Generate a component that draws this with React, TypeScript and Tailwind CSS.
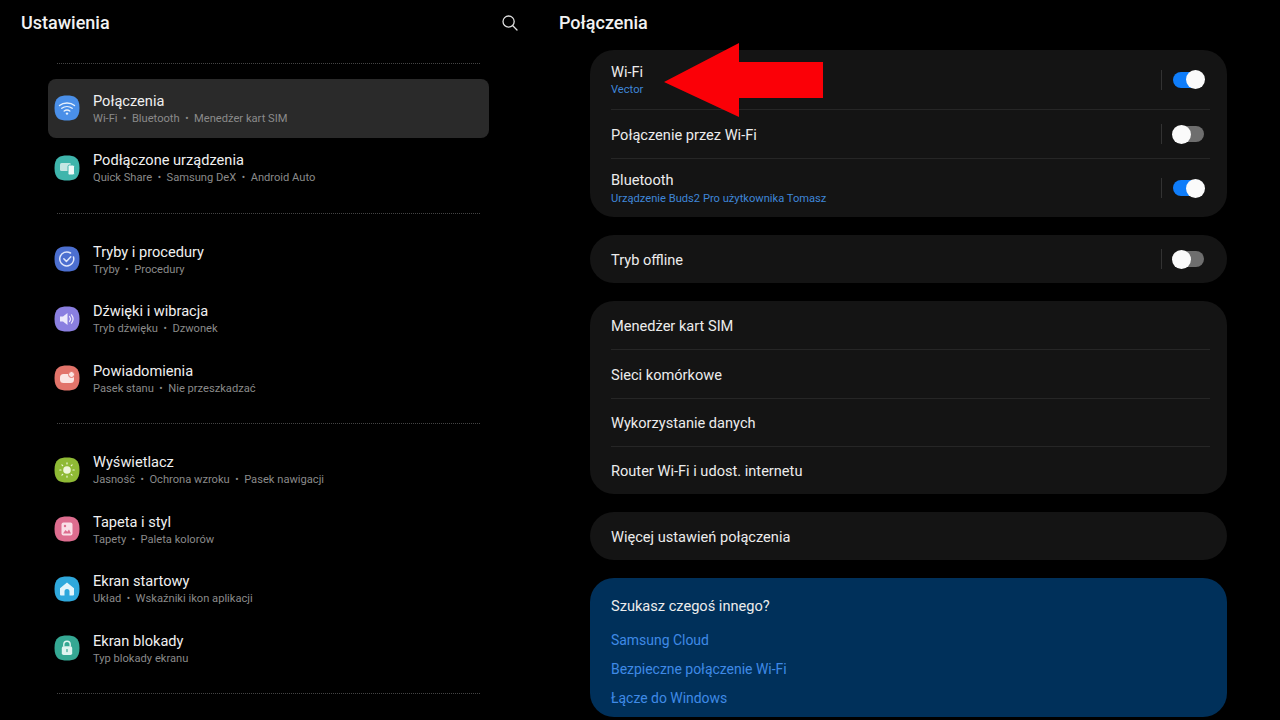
import React from "react";

const font = { fontFamily: "Roboto, 'Noto Sans', sans-serif" };

function Squircle({ color, children }: { color: string; children: React.ReactNode }) {
  return (
    <svg width="26" height="26" viewBox="0 0 26 26" className="shrink-0">
      <path d="M13 .5C20 .5 25.500 2 25.500 13S20 25.500 13 25.500.5 24 .5 13 6 .5 13 .5Z" fill={color} />
      {children}
    </svg>
  );
}

const icons: Record<string, React.ReactNode> = {
  wifi: (
    <Squircle color="#4a8fe8">
      <g fill="none" stroke="#e6f0fc" strokeWidth="1.4" strokeLinecap="round">
        <path d="M5.500 10.500C9.500 7.200 16.500 7.200 20.500 10.500" />
        <path d="M7.800 13.300C10.800 11 15.200 11 18.200 13.300" />
        <path d="M10.200 16C11.800 14.800 14.200 14.800 15.800 16" />
      </g>
      <circle cx="13" cy="18.600" r="1.200" fill="#e6f0fc" />
    </Squircle>
  ),
  devices: (
    <Squircle color="#3fb5ac">
      <rect x="6" y="8" width="11" height="8" rx="1.500" fill="#c5e6e3" />
      <rect x="14" y="10" width="6.500" height="10" rx="1.500" fill="#eef9f8" stroke="#3fb5ac" strokeWidth="1" />
    </Squircle>
  ),
  modes: (
    <Squircle color="#4c6fd0">
      <path d="M19.500 11A7 7 0 1 1 16.500 7" fill="none" stroke="#dfe6fa" strokeWidth="1.500" strokeLinecap="round" />
      <path d="M9.800 12.800L12.400 15.400L16.800 10.800" fill="none" stroke="#dfe6fa" strokeWidth="1.500" strokeLinecap="round" strokeLinejoin="round" />
    </Squircle>
  ),
  sound: (
    <Squircle color="#8a7fe0">
      <path d="M6 10.500H9L13.500 7V19L9 15.500H6Z" fill="#ece9fb" />
      <path d="M15.500 10.500C16.700 12 16.700 14 15.500 15.500M17.500 8.800C19.500 11.400 19.500 14.600 17.500 17.200" fill="none" stroke="#ece9fb" strokeWidth="1.200" strokeLinecap="round" />
    </Squircle>
  ),
  notif: (
    <Squircle color="#e2746a">
      <rect x="6" y="9" width="14" height="9" rx="3.500" fill="#fbe6e3" />
      <circle cx="17.500" cy="9.500" r="3" fill="#fbe6e3" stroke="#e2746a" strokeWidth="1" />
    </Squircle>
  ),
  display: (
    <Squircle color="#8fba35">
      <circle cx="13" cy="13" r="3.800" fill="#eff6da" />
      <g stroke="#eff6da" strokeWidth="1.200" strokeLinecap="round">
        <path d="M13 5.800V7M13 19V20.200M5.800 13H7M19 13H20.200M7.900 7.900L8.700 8.700M17.300 17.300L18.100 18.100M7.900 18.100L8.700 17.300M17.300 8.700L18.100 7.900" />
      </g>
    </Squircle>
  ),
  wallpaper: (
    <Squircle color="#dd6d8f">
      <rect x="7.500" y="6.500" width="11" height="13" rx="2" fill="#f9dfe7" />
      <path d="M9 17.500L11.500 14L13.300 15.800L15 13.500L17 17.500Z" fill="#dd6d8f" />
      <circle cx="11" cy="10" r="1.200" fill="#dd6d8f" />
    </Squircle>
  ),
  home: (
    <Squircle color="#2fa8dc">
      <path d="M13 6.500L20 12.200V18.500A1 1 0 0 1 19 19.500H15.500V15.500A2.500 2.500 0 0 0 10.500 15.500V19.500H7A1 1 0 0 1 6 18.500V12.200Z" fill="#e3f4fb" />
    </Squircle>
  ),
  lock: (
    <Squircle color="#35a893">
      <path d="M9.800 11.500V9.500A3.200 3.200 0 0 1 16.200 9.500V11.500" fill="none" stroke="#e0f4f0" strokeWidth="1.400" />
      <rect x="7.800" y="11.200" width="10.400" height="8.800" rx="1.800" fill="#e0f4f0" />
      <rect x="12.400" y="14" width="1.200" height="3.200" rx=".6" fill="#35a893" />
    </Squircle>
  ),
};

function Row({ icon, title, parts, active }: { icon: string; title: string; parts: string[]; active?: boolean }) {
  return (
    <div className={`flex h-[59.500px] items-center gap-[13px] rounded-lg pl-[6px] ${active ? "bg-[#2a2a2a]" : ""}`}>
      {icons[icon]}
      <div className="flex flex-col">
        <div className="text-[14.600px] leading-[20px] text-[#f0f0f0]">{title}</div>
        <div className="mt-[1px] flex items-center text-[11.150px] leading-[14px] text-[#8a8a8a]">
          {parts.map((p, i) => (
            <React.Fragment key={p}>
              {i > 0 && <span className="mx-[5.500px] text-[10px]">•</span>}
              <span>{p}</span>
            </React.Fragment>
          ))}
        </div>
      </div>
    </div>
  );
}

function Dots() {
  return <div className="mx-[9px] border-t border-dotted border-[#444444]" />;
}

function Toggle({ on }: { on?: boolean }) {
  return (
    <div className={`flex items-center ${on ? "" : "mb-[1px]"}`}>
      <div className="mr-[11px] h-[20px] w-px bg-[#333333]" />
      <div className={`relative h-[16px] w-[31px] rounded-full ${on ? "bg-[#0f7dfa]" : "bg-[#6e6e6e]"}`}>
        <div className={`absolute top-[-1.500px] size-[19px] rounded-full bg-[#fafafa] ${on ? "right-[-1px]" : "left-[-1px]"}`} />
      </div>
    </div>
  );
}

function Item({ title, sub, toggle, h }: { title: string; sub?: string; toggle?: "on" | "off"; h: string }) {
  return (
    <div className={`flex items-center justify-between pr-[6px] ${h}`}>
      <div className="flex flex-col">
        <div className="text-[14.600px] leading-[20px] text-[#ececec]">{title}</div>
        {sub && <div className="mt-[1.500px] text-[11.150px] leading-[14px] text-[#3f86d8]">{sub}</div>}
      </div>
      {toggle && <Toggle on={toggle === "on"} />}
    </div>
  );
}

function Line() {
  return <div className="h-px bg-[#262626]" />;
}

export default function App() {
  return (
    <div style={font} className="relative flex h-[720px] w-[1280px] overflow-hidden bg-black">
      <aside className="flex w-[530px] shrink-0 flex-col">
        <header className="flex h-[46px] items-center justify-between pl-[21px] pr-[11px]">
          <h1 className="mb-[2px] text-[18px] font-medium text-[#f2f2f2]">Ustawienia</h1>
          <svg width="18" height="18" viewBox="0 0 18 18" fill="none" stroke="#e0e0e0" strokeWidth="1.300" strokeLinecap="round">
            <circle cx="7.600" cy="7.600" r="5.600" />
            <path d="M11.800 11.800L16 16" />
          </svg>
        </header>
        <div className="flex flex-col pl-[48px] pr-[41px] pt-[16.500px]">
          <Dots />
          <div className="mt-[15px] mb-[15px]">
            <Row active icon="wifi" title="Połączenia" parts={["Wi-Fi", "Bluetooth", "Menedżer kart SIM"]} />
            <Row icon="devices" title="Podłączone urządzenia" parts={["Quick Share", "Samsung DeX", "Android Auto"]} />
          </div>
          <Dots />
          <div className="mt-[16px] mb-[15px]">
            <Row icon="modes" title="Tryby i procedury" parts={["Tryby", "Procedury"]} />
            <Row icon="sound" title="Dźwięki i wibracja" parts={["Tryb dźwięku", "Dzwonek"]} />
            <Row icon="notif" title="Powiadomienia" parts={["Pasek stanu", "Nie przeszkadzać"]} />
          </div>
          <Dots />
          <div className="mt-[16px] mb-[15px]">
            <Row icon="display" title="Wyświetlacz" parts={["Jasność", "Ochrona wzroku", "Pasek nawigacji"]} />
            <Row icon="wallpaper" title="Tapeta i styl" parts={["Tapety", "Paleta kolorów"]} />
            <Row icon="home" title="Ekran startowy" parts={["Układ", "Wskaźniki ikon aplikacji"]} />
            <Row icon="lock" title="Ekran blokady" parts={["Typ blokady ekranu"]} />
          </div>
          <Dots />
        </div>
      </aside>
      <main className="flex flex-1 flex-col">
        <header className="flex h-[46px] items-center pl-[29px]">
          <h2 className="mb-[2px] text-[18px] font-medium text-[#f2f2f2]">Połączenia</h2>
        </header>
        <div className="ml-[60px] mr-[53px] mt-[4px] flex flex-col gap-[18px]">
          <section className="rounded-[24px] bg-[#141414] px-[21px] pr-[17px]">
            <Item h="h-[59px]" title="Wi-Fi" sub="Vector" toggle="on" />
            <Line />
            <Item h="h-[48px] pt-[1px]" title="Połączenie przez Wi-Fi" toggle="off" />
            <Line />
            <Item h="h-[58px]" title="Bluetooth" sub="Urządzenie Buds2 Pro użytkownika Tomasz" toggle="on" />
          </section>
          <section className="rounded-[24px] bg-[#141414] px-[21px] pr-[17px]">
            <Item h="h-[48px] pt-[1px]" title="Tryb offline" toggle="off" />
          </section>
          <section className="rounded-[24px] bg-[#141414] px-[21px] pr-[17px]">
            <Item h="h-[48px] pt-[1px]" title="Menedżer kart SIM" />
            <Line />
            <Item h="h-[48px] pt-[1px]" title="Sieci komórkowe" />
            <Line />
            <Item h="h-[47px]" title="Wykorzystanie danych" />
            <Line />
            <Item h="h-[47px]" title="Router Wi-Fi i udost. internetu" />
          </section>
          <section className="rounded-[24px] bg-[#141414] px-[21px] pr-[17px]">
            <Item h="h-[48px] pt-[1px]" title="Więcej ustawień połączenia" />
          </section>
          <section className="h-[139px] rounded-[24px] bg-[#00305a] px-[21px] pt-[18px]">
            <div className="text-[14.600px] leading-[20px] text-[#ececec]">Szukasz czegoś innego?</div>
            <div className="mt-[14px] flex flex-col gap-[9px] text-[13.950px] leading-[20px] text-[#3f8ae6]">
              <div>Samsung Cloud</div>
              <div>Bezpieczne połączenie Wi-Fi</div>
              <div>Łącze do Windows</div>
            </div>
          </section>
        </div>
      </main>
      <svg className="absolute left-[664px] top-[43px]" width="160" height="75" viewBox="0 0 160 75">
        <polygon points="0,39 75,0 75,19 159,19 159,55 75,55 75,74" fill="#fb0007" />
      </svg>
    </div>
  );
}
